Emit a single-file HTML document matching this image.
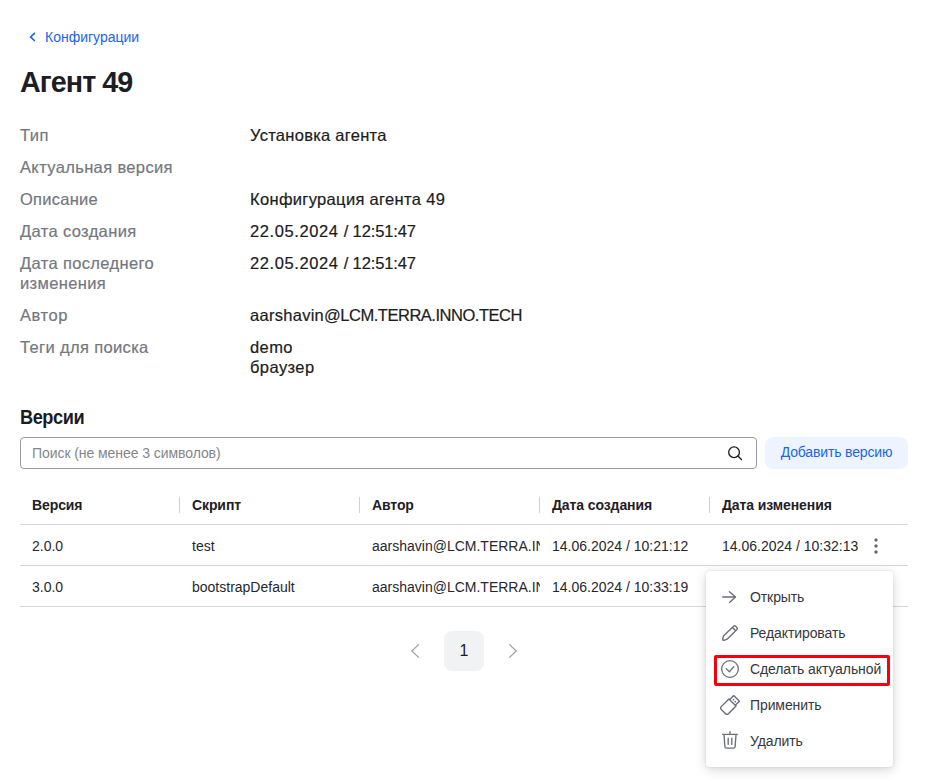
<!DOCTYPE html>
<html lang="ru">
<head>
<meta charset="utf-8">
<title>Агент 49</title>
<style>
*{box-sizing:border-box;margin:0;padding:0}
html,body{width:925px;height:780px;background:#fff;overflow:hidden}
body{font-family:"Liberation Sans",sans-serif;color:#1b1c21;position:relative}
.abs{position:absolute;white-space:nowrap}
.back{left:27px;top:28px;font-size:14px;line-height:18px;color:#1764f2;display:flex;align-items:center}
.back svg{margin-left:1.3px;margin-right:6.7px}
h1{position:absolute;left:20px;top:64px;font-size:28.7px;line-height:36px;font-weight:700;color:#1d1e24;letter-spacing:-0.95px}
.lbl{position:absolute;left:20px;font-size:16.5px;line-height:20px;color:#747780;letter-spacing:.36px;-webkit-text-stroke:.2px #747780}
.val{position:absolute;left:250px;font-size:16.5px;line-height:20px;color:#1b1c21;white-space:nowrap;letter-spacing:.3px;-webkit-text-stroke:.2px #1b1c21}
h2{position:absolute;left:20px;top:404.5px;font-size:20px;line-height:24px;font-weight:700;transform:scaleX(.91);transform-origin:0 0;letter-spacing:-.5px}
.search{position:absolute;left:20px;top:437px;width:737px;height:32px;border:1px solid #9a9ba3;border-radius:4px;font-size:14px;line-height:30px;color:#85868d;padding-left:11px;letter-spacing:-.07px}
.search svg{position:absolute;right:13px;top:7px}
.btn{letter-spacing:-.15px;position:absolute;left:765px;top:437px;width:143px;height:32px;border-radius:8px;background:#eef4ff;color:#1764f2;font-size:14px;line-height:31.3px;text-align:center}
.th{position:absolute;top:496px;font-size:14px;line-height:18px;font-weight:700;color:#1f2025;letter-spacing:-.1px}
.sep{position:absolute;top:497px;width:1px;height:16px;background:#d0d1d6}
.hr{position:absolute;left:20px;width:888px;height:1px;background:#d5d6de}
.td{position:absolute;font-size:14px;line-height:18px;color:#26272d;white-space:nowrap;overflow:hidden}
.pg{position:absolute;left:444px;top:631px;width:40px;height:40px;border-radius:8px;background:#f1f2f4;font-size:16px;line-height:40px;text-align:center;color:#1b1c21}
.menu{position:absolute;left:706px;top:571px;width:187px;height:196px;background:#fff;border-radius:4px;box-shadow:0 3px 12px rgba(0,0,0,.16),0 0 3px rgba(0,0,0,.10)}
.mi{position:absolute;left:44px;font-size:14px;line-height:18px;color:#36373d;white-space:nowrap;letter-spacing:-.1px}
.menu svg{position:absolute;left:14px}
.red{position:absolute;left:8px;top:84px;width:176px;height:31px;border:3px solid #f5000b;border-radius:2px}
</style>
</head>
<body>
<div class="abs back"><svg width="10" height="12" viewBox="0 0 10 12"><path d="M6.9 1.8 L2.6 5.9 L6.9 10" fill="none" stroke="#1764f2" stroke-width="1.6"/></svg>Конфигурации</div>
<h1>Агент 49</h1>

<div class="lbl" style="top:125px;letter-spacing:.5px">Тип</div><div class="val" style="top:125px;letter-spacing:.28px">Установка агента</div>
<div class="lbl" style="top:157px">Актуальная версия</div>
<div class="lbl" style="top:189px;letter-spacing:.25px">Описание</div><div class="val" style="top:189px;letter-spacing:.33px">Конфигурация агента 49</div>
<div class="lbl" style="top:221px">Дата создания</div><div class="val" style="top:221px;letter-spacing:-.12px"><span style="letter-spacing:.59px">22.05.2024 </span>/ 12:51:47</div>
<div class="lbl" style="top:253px">Дата последнего<br>изменения</div><div class="val" style="top:253px;letter-spacing:-.12px"><span style="letter-spacing:.59px">22.05.2024 </span>/ 12:51:47</div>
<div class="lbl" style="top:305px;letter-spacing:.58px">Автор</div><div class="val" style="top:305px;letter-spacing:-.48px"><span style="letter-spacing:.28px">aarshavin</span>@LCM.TERRA.INNO.TECH</div>
<div class="lbl" style="top:337px">Теги для поиска</div><div class="val" style="top:337px;letter-spacing:.42px">demo<br>браузер</div>

<h2>Версии</h2>
<div class="search">Поиск (не менее 3 символов)
<svg width="16" height="16" viewBox="0 0 16 16"><circle cx="7.05" cy="7.2" r="5.35" fill="none" stroke="#1b1c21" stroke-width="1.3"/><path d="M10.9 11 L14.5 14.5" stroke="#1b1c21" stroke-width="1.3" stroke-linecap="round"/></svg>
</div>
<div class="btn">Добавить версию</div>

<div class="th" style="left:32px">Версия</div>
<div class="th" style="left:192px">Скрипт</div>
<div class="th" style="left:372px">Автор</div>
<div class="th" style="left:552px">Дата создания</div>
<div class="th" style="left:722px">Дата изменения</div>
<div class="sep" style="left:179px"></div>
<div class="sep" style="left:359px"></div>
<div class="sep" style="left:539px"></div>
<div class="sep" style="left:709px"></div>
<div class="hr" style="top:524px"></div>
<div class="hr" style="top:565px"></div>
<div class="hr" style="top:606px"></div>

<div class="td" style="left:32px;top:537px">2.0.0</div>
<div class="td" style="left:192px;top:537px">test</div>
<div class="td" style="left:372px;top:537px;width:168px">aarshavin@LCM.TERRA.INNO.TECH</div>
<div class="td" style="left:552px;top:537px">14.06.2024 / 10:21:12</div>
<div class="td" style="left:722px;top:537px">14.06.2024 / 10:32:13</div>
<svg class="abs" style="left:872px;top:537px" width="8" height="18" viewBox="0 0 8 18"><circle cx="4" cy="3" r="1.7" fill="#676976"/><circle cx="4" cy="9" r="1.7" fill="#676976"/><circle cx="4" cy="15" r="1.7" fill="#676976"/></svg>

<div class="td" style="left:32px;top:578px">3.0.0</div>
<div class="td" style="left:192px;top:578px">bootstrapDefault</div>
<div class="td" style="left:372px;top:578px;width:168px">aarshavin@LCM.TERRA.INNO.TECH</div>
<div class="td" style="left:552px;top:578px">14.06.2024 / 10:33:19</div>

<svg class="abs" style="left:408px;top:643px" width="14" height="16" viewBox="0 0 14 16"><path d="M10.9 1.4 L3.8 8 L10.9 14.6" fill="none" stroke="#9b9ca4" stroke-width="1.2"/></svg>
<div class="pg">1</div>
<svg class="abs" style="left:506px;top:643px" width="14" height="16" viewBox="0 0 14 16"><path d="M3.2 1.4 L10.3 8 L3.2 14.6" fill="none" stroke="#9b9ca4" stroke-width="1.2"/></svg>

<div class="menu">
  <svg style="top:16px" width="20" height="20" viewBox="0 0 20 20"><path d="M2.7 10 H15.3 M9.5 4.7 L15.5 10 L9.5 15.4" fill="none" stroke="#6c6f7b" stroke-width="1.4" stroke-linecap="round" stroke-linejoin="round"/></svg>
  <div class="mi" style="top:17px">Открыть</div>
  <svg style="top:51.5px" width="20" height="20" viewBox="0 0 20 20"><path d="M3.7 12.8 L13.6 3.2 a1.5 1.5 0 0 1 2.1 0 l1.2 1.2 a1.5 1.5 0 0 1 0 2.1 L7.1 16.2 Q5.6 17.1 3.6 17.3 Q2.5 17.4 2.7 16.3 Q2.9 14.3 3.7 12.8 Z M12.5 4.5 L15.4 7.4" fill="none" stroke="#6c6f7b" stroke-width="1.4" stroke-linejoin="round"/></svg>
  <div class="mi" style="top:53px">Редактировать</div>
  <svg style="top:87.9px" width="20" height="20" viewBox="0 0 20 20"><circle cx="10" cy="10" r="8.35" fill="none" stroke="#6c6f7b" stroke-width="1.3"/><path d="M6.2 9.6 L9.35 12.75 L13.8 7.8" fill="none" stroke="#6c6f7b" stroke-width="1.3" stroke-linecap="round" stroke-linejoin="round"/></svg>
  <div class="mi" style="top:89px">Сделать актуальной</div>
  <svg style="left:14.1px;top:123.85px" width="20" height="20" viewBox="0 0 20 20"><g transform="rotate(45 10 10)" fill="none" stroke="#6c6f7b" stroke-width="1.4" stroke-linejoin="round"><path d="M5 6.5 H15 V17.3 a2 2 0 0 1 -2 2 H7 a2 2 0 0 1 -2 -2 Z"/><path d="M6 6.5 V0.7 H14 V6.5"/><circle cx="8.7" cy="3.8" r=".85" fill="#6c6f7b" stroke="none"/><circle cx="11.3" cy="3.8" r=".85" fill="#6c6f7b" stroke="none"/></g></svg>
  <div class="mi" style="top:125px">Применить</div>
  <svg style="top:159px" width="20" height="20" viewBox="0 0 20 20"><path d="M2.6 4.35 H17.4 M10 1.6 V4.35 M4 4.6 L4.9 16.6 a1.6 1.6 0 0 0 1.6 1.5 H13.5 a1.6 1.6 0 0 0 1.6 -1.5 L16 4.6 M8.2 8.2 V14.4 M11.8 8.2 V14.4" fill="none" stroke="#6c6f7b" stroke-width="1.35" stroke-linecap="round" stroke-linejoin="round"/></svg>
  <div class="mi" style="top:161px">Удалить</div>
  <div class="red"></div>
</div>
</body>
</html>
